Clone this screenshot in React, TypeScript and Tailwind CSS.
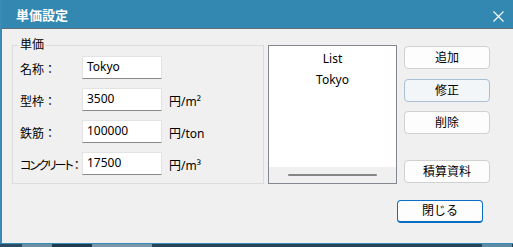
import React from "react";

function Field({ label, value, unit, palt }: { label: string; value: string; unit?: string; palt?: boolean }) {
  return (
    <div className="flex items-start h-[23px]">
      <div className="w-[62px] mt-[6px] leading-[16px] whitespace-nowrap">
        {palt ? (
          <>
            <span className="[font-feature-settings:'palt'] tracking-[-2px]">{label}</span>
            <span className="ml-[-1px]">：</span>
          </>
        ) : (
          <span>{label}：</span>
        )}
      </div>
      <div className="w-[80px] h-[23px] bg-white border border-[#e3e3e3] border-b-[#8a8a8a] pl-[4px] pt-[2px] leading-[16px]">
        {value}
      </div>
      {unit && <div className="ml-[7px] mt-[6px] leading-[16px]">{unit}</div>}
    </div>
  );
}

function Btn({ children, className }: { children: React.ReactNode; className?: string }) {
  return (
    <div
      className={
        "w-[86px] h-[23px] rounded-[4px] border flex items-center justify-center leading-[16px] " +
        (className ?? "border-[#d0d0d0] bg-[#fdfdfd]")
      }
    >
      {children}
    </div>
  );
}

export default function App() {
  return (
    <div className="w-[513px] h-[247px] overflow-hidden bg-[#1f3b4e] font-['Noto_Sans','Noto_Sans_CJK_JP',sans-serif] text-[12px] text-black">
      <div className="h-[243px] flex flex-col border-l-2 border-[#3a8ab6]">
        <div className="h-[28px] bg-[#3388b2] flex items-start justify-between pl-[14px] pr-[9px] text-white">
          <div className="mt-[6px] text-[13px] font-bold leading-[18px]">単価設定</div>
          <svg className="mt-[11px]" width="11" height="11" viewBox="0 0 11 11">
            <path d="M0.5 0.5 L10.5 10.5 M10.5 0.5 L0.5 10.5" stroke="white" strokeWidth="1.1" />
          </svg>
        </div>
        <div className="h-px bg-[#5d6e79]" />
        <div className="flex-1 bg-[#f0f0f0] pl-[10px] pt-[16px]">
          <div className="flex">
            <div className="relative w-[252px] h-[139px] border border-[#dcdcdc] pl-[7px] pt-[10px] flex flex-col gap-[9px]">
              <div className="absolute top-[-9px] left-[5px] px-[2px] bg-[#f0f0f0] leading-[16px]">単価</div>
              <Field label="名称" value="Tokyo" />
              <Field label="型枠" value="3500" unit="円/m²" />
              <Field label="鉄筋" value="100000" unit="円/ton" />
              <Field label="コンクリート" value="17500" unit="円/m³" palt />
            </div>
            <div className="ml-[4px] w-[129px] h-[139px] border border-[#828790] bg-white flex flex-col">
              <div className="mt-[5px] text-center leading-[16px]">List</div>
              <div className="mt-[5px] text-center leading-[16px]">Tokyo</div>
              <div className="flex-1" />
              <div className="h-[16px] bg-[#f0f0f0] flex items-center justify-center">
                <div className="w-[89px] h-[2px] rounded-full bg-[#858585]" />
              </div>
            </div>
            <div className="ml-[7px] flex flex-col">
              <div className="mt-[1px]">
                <Btn>追加</Btn>
              </div>
              <div className="mt-[10px]">
                <Btn className="border-[#a9bfd5] bg-[#f3f6f9]">修正</Btn>
              </div>
              <div className="mt-[9px]">
                <Btn>削除</Btn>
              </div>
              <div className="mt-auto mb-[1px]">
                <Btn>積算資料</Btn>
              </div>
            </div>
          </div>
          <div className="mt-[16px] ml-[385px]">
            <Btn className="border-[#0a6ec6] border-b-2 bg-[#fdfdfd]">閉じる</Btn>
          </div>
        </div>
      </div>
      <div className="h-px bg-[#3a8ab6]" />
      <div className="h-[3px] flex">
        <div className="w-[22px] bg-[#2a4d63]" />
        <div className="w-[30px] bg-[#6c8ea3]" />
        <div className="w-[40px] bg-[#1f3b4e]" />
        <div className="w-[60px] bg-[#7b98aa]" />
        <div className="w-[330px] bg-[#264658]" />
        <div className="w-[30px] bg-[#5f8aa4]" />
      </div>
    </div>
  );
}
